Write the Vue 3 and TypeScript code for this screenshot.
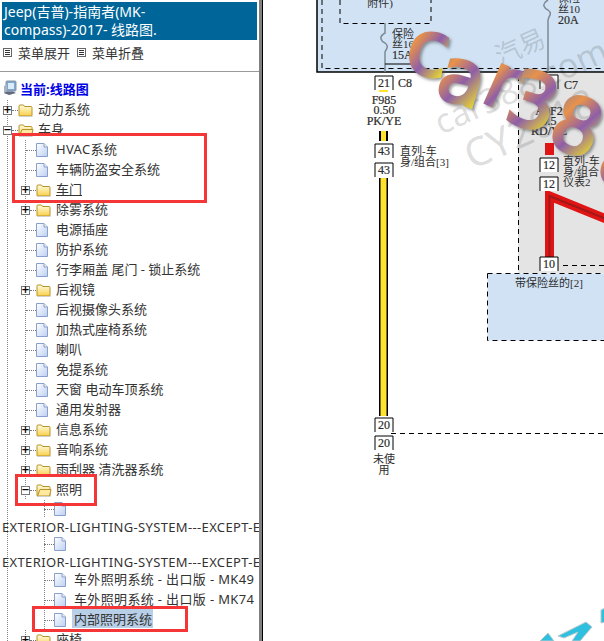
<template>
  <div class="page">
    <aside class="side">
      <div class="title">Jeep(吉普)-指南者(MK-<br />compass)-2017- 线路图.</div>
      <div class="menu">
        <span class="menu-item"><i class="menu-ico"></i>菜单展开</span>
        <span class="menu-item"><i class="menu-ico"></i>菜单折叠</span>
      </div>
      <div class="current">
        <svg class="pc" width="14" height="16" viewBox="0 0 14 16">
          <rect x="3" y="1" width="10" height="10" rx="1" fill="#7fa6cf" stroke="#8a93a5" />
          <rect x="5" y="3" width="6" height="6" fill="#d9ecfb" />
          <path d="M1 6l3-2v10l-3-1z" fill="#aab3c2" />
          <path d="M1 13l5 2 7-2-3-1.500H4z" fill="#5d6a80" />
        </svg>
        <span>当前:线路图</span>
      </div>
      <svg class="defs" width="0" height="0">
        <linearGradient id="folderFill" x1="0" y1="0" x2="0" y2="1">
          <stop offset="0" stop-color="#fffde0" />
          <stop offset="1" stop-color="#f9cf4a" />
        </linearGradient>
        <linearGradient id="fileFill" x1="0" y1="0" x2="1" y2="1">
          <stop offset="0" stop-color="#ffffff" />
          <stop offset="1" stop-color="#bcd0f2" />
        </linearGradient>
      </svg>
      <div class="tree">
        <div
          v-for="(n, i) in rows"
          :key="i"
          class="row"
          :class="[`d${n.depth}`, { long: n.long }]"
        >
          <div class="line">
            <span v-if="n.toggle" class="toggle">{{ n.toggle === 'open' ? '−' : '+' }}</span>
            <span class="stub" :class="{ free: !n.toggle }"></span>
            <span class="ico">
              <svg v-if="n.folder" width="16" height="14" viewBox="0 0 16 14">
                <path
                  d="M1 12.500V3q0-1 1-1h3.500l1 1.500H13q1 0 1 1v8q0 .5-.5.5H1.500q-.5 0-.5-.5z"
                  fill="url(#folderFill)"
                  stroke="#b8912a"
                />
                <path v-if="n.toggle === 'open'" d="M1.500 13l2.500-6.500h11L13.500 13z" fill="#fde9a0" stroke="#b8912a" />
                <path d="M2 13.500h12.500" stroke="#cfcfcf" />
              </svg>
              <svg v-else width="12" height="14" viewBox="0 0 12 14">
                <path d="M.5.500h7.500l3.500 3.500v9.500h-11z" fill="url(#fileFill)" stroke="#8aa0cc" />
                <path d="M8 .5v3.500h3.500" fill="#e6eefb" stroke="#8aa0cc" />
              </svg>
            </span>
            <span
              v-if="!n.long"
              class="label"
              :class="{ under: n.under, sel: n.sel, wide: n.wide }"
            >{{ n.text }}</span>
          </div>
          <div v-if="n.long" class="long-text">{{ n.text }}</div>
        </div>
      </div>
      <div class="mark m1"></div>
      <div class="mark m2"></div>
      <div class="mark m3"></div>
    </aside>

    <main class="canvas">
      <svg width="342" height="641" viewBox="262 0 342 641">
        <defs>
          <linearGradient id="tube" x1="0" y1="0" x2="1" y2="1">
            <stop offset="0" stop-color="#7d7fa8" />
            <stop offset=".3" stop-color="#e8924a" />
            <stop offset=".55" stop-color="#8e5fa8" />
            <stop offset=".85" stop-color="#e8d730" />
            <stop offset="1" stop-color="#d4c21e" />
          </linearGradient>
          <filter id="shade" x="-20%" y="-20%" width="150%" height="150%">
            <feDropShadow dx="2" dy="2" stdDeviation="1.500" flood-color="#555" flood-opacity=".6" />
          </filter>
        </defs>

        <!-- blue and grey areas -->
        <rect x="317" y="-2" width="290" height="74" fill="#d0e2f3" stroke="#000" stroke-width="1.500" />
        <rect x="518" y="73" width="90" height="200" fill="#e4e4e4" />
        <path d="M322 0v68.500H604" class="dash" />
        <path d="M340 0v23.500h91V0" class="dash" />
        <path d="M518.500 76V272" class="dash" />
        <rect x="487.500" y="273.500" width="120" height="67" fill="#d0e2f3" class="dash" />
        <path d="M563 265.500H604" class="dash" />
        <path d="M391 433.500H604" class="dash" />

        <!-- fuses -->
        <path d="M385 23v10q-5 3-4 6t4 4q4 3 1 7l-1 2v20" class="wire" />
        <path d="M548 0q-5 3-4 6t4 4q4 3 1 7l-1 3v52" class="wire" />
        <path d="M385 64h28" stroke="#000" fill="none" />

        <!-- wires -->
        <rect x="379" y="88" width="9" height="4" fill="#ffe22e" />
        <rect x="379" y="131" width="9" height="10" fill="#000" />
        <rect x="381" y="131" width="5" height="10" fill="#ffe22e" />
        <rect x="379" y="178" width="9" height="238" fill="#000" />
        <rect x="380.500" y="178" width="6" height="238" fill="#ffe22e" />
        <rect x="545" y="143" width="9" height="12" fill="#e01414" />
        <path d="M549.500 257V196L606 219" fill="none" stroke="#e01414" stroke-width="9" />
        <path d="M549.500 257V196L606 219" fill="none" stroke="#a01818" stroke-width="2" />

        <!-- connectors -->
        <g v-for="b in boxes" :key="b.y + b.t + b.x">
          <path
            :d="`M${b.x} ${b.y + 14}V${b.y}H${b.x + 18}V${b.y + 14}`"
            fill="#fff"
            stroke="#000"
          />
          <text :x="b.x + 9" :y="b.y + 11" text-anchor="middle" class="t num">{{ b.t }}</text>
        </g>

        <text
          v-for="l in labels"
          :key="l.t + l.x + l.y"
          :x="l.x"
          :y="l.y"
          :text-anchor="l.mid ? 'middle' : 'start'"
          class="t"
          :class="{ num: isLatin(l.t) }"
        >{{ l.t }}</text>

        <!-- grey watermark -->
        <g class="ghost">
          <text transform="translate(441 135) rotate(-24)" font-size="34">car388.com</text>
          <text transform="translate(472 170) rotate(-24)" font-size="40">CY2018</text>
          <text transform="translate(500 66) rotate(-24)" font-size="26">汽易</text>
        </g>

        <!-- logo -->
        <g class="logo" filter="url(#shade)">
          <text transform="translate(403 70) rotate(12)">c</text>
          <text transform="translate(433 96) rotate(16)">a</text>
          <text transform="translate(479 100) rotate(24)">r</text>
          <text transform="translate(502 119) rotate(18)">3</text>
          <text transform="translate(545 143) rotate(20)">8</text>
          <text transform="translate(593 178) rotate(20)">8</text>
        </g>
        <g fill="#2fc0e0" stroke="#b9c9cc" stroke-width="1">
          <path d="M540 641l8-8 6 8zM558 636l28-14 6 5-12 14h-8l6-9-14 6z" />
          <path d="M601 610l4-2v14l-4 1z" />
        </g>
      </svg>
    </main>
  </div>
</template>

<script setup lang="ts">
interface Row {
  text: string
  depth: number
  folder?: boolean
  toggle?: 'open' | 'closed'
  long?: boolean
  under?: boolean
  sel?: boolean
  wide?: boolean
}

const file = (text: string, depth = 1): Row => ({ text, depth })
const dir = (text: string, depth = 1, toggle: 'open' | 'closed' = 'closed'): Row => ({
  text,
  depth,
  folder: true,
  toggle
})

const rows: Row[] = [
  dir('动力系统', 0),
  dir('车身', 0, 'open'),
  { ...file('HVAC系统'), wide: true },
  file('车辆防盗安全系统'),
  { ...dir('车门'), under: true },
  dir('除雾系统'),
  file('电源插座'),
  file('防护系统'),
  file('行李厢盖 尾门 - 锁止系统'),
  dir('后视镜'),
  file('后视摄像头系统'),
  file('加热式座椅系统'),
  file('喇叭'),
  file('免提系统'),
  file('天窗 电动车顶系统'),
  file('通用发射器'),
  dir('信息系统'),
  dir('音响系统'),
  dir('雨刮器 清洗器系统'),
  dir('照明', 1, 'open'),
  { ...file('EXTERIOR-LIGHTING-SYSTEM---EXCEPT-EXPORT', 2), long: true },
  { ...file('EXTERIOR-LIGHTING-SYSTEM---EXCEPT-EXPORT', 2), long: true },
  { ...file('车外照明系统 - 出口版 - MK49', 2), wide: true },
  { ...file('车外照明系统 - 出口版 - MK74', 2), wide: true },
  { ...file('内部照明系统', 2), sel: true },
  dir('座椅')
]

const boxes = [
  { x: 375, y: 76, t: '21' },
  { x: 375, y: 144, t: '43' },
  { x: 375, y: 163, t: '43' },
  { x: 375, y: 418, t: '20' },
  { x: 375, y: 436, t: '20' },
  { x: 540, y: 75, t: '8' },
  { x: 540, y: 158, t: '12' },
  { x: 540, y: 177, t: '12' },
  { x: 540, y: 257, t: '10' }
]

const labels = [
  { x: 380, y: 7, t: '附件)', mid: true },
  { x: 392, y: 38, t: '保险' },
  { x: 392, y: 48, t: '丝16' },
  { x: 392, y: 59, t: '15A' },
  { x: 558, y: 2, t: '保险' },
  { x: 558, y: 13, t: '丝10' },
  { x: 558, y: 24, t: '20A' },
  { x: 398, y: 87, t: 'C8' },
  { x: 564, y: 89, t: 'C7' },
  { x: 384, y: 104, t: 'F985', mid: true },
  { x: 384, y: 114, t: '0.50', mid: true },
  { x: 384, y: 125, t: 'PK/YE', mid: true },
  { x: 400, y: 155, t: '直列-车' },
  { x: 400, y: 166, t: '身/组合[3]' },
  { x: 549, y: 115, t: 'A9F2', mid: true },
  { x: 549, y: 125, t: '0.5', mid: true },
  { x: 549, y: 135, t: 'RD/YE', mid: true },
  { x: 563, y: 165, t: '直列-车' },
  { x: 563, y: 176, t: '身/组合' },
  { x: 563, y: 186, t: '仪表2' },
  { x: 549, y: 287, t: '带保险丝的[2]', mid: true },
  { x: 384, y: 463, t: '未使', mid: true },
  { x: 384, y: 474, t: '用', mid: true }
]

const isLatin = (s: string) => /^[\x20-\x7e]+$/.test(s)
</script>

<style>
html,
body {
  margin: 0;
  background: #fff;
  overflow: hidden;
}
</style>

<style scoped>
.page {
  display: flex;
  width: 604px;
  height: 641px;
  overflow: hidden;
  background: #fff;
  font-family: "Noto Sans", "Noto Sans CJK SC", sans-serif;
  font-size: 13px;
  color: #333;
}

.side {
  position: relative;
  flex: 0 0 259px;
  width: 259px;
  overflow: hidden;
  padding-top: 2px;
  box-sizing: border-box;
}

.title {
  margin-left: 2px;
  width: 255px;
  height: 38px;
  box-sizing: border-box;
  padding: 1px 2px;
  background: #006699;
  color: #fff;
  font-size: 14px;
  line-height: 18px;
}

.menu {
  display: flex;
  align-items: center;
  gap: 7px;
  height: 24px;
  padding: 0 0 7px 3px;
  border-bottom: 1px solid #999;
}

.menu-item {
  display: flex;
  align-items: center;
  gap: 6px;
}

.menu-ico {
  display: block;
  width: 5px;
  height: 5px;
  padding: 1px;
  border: 1px solid #666;
  background: repeating-linear-gradient(#333 0 1px, #fff 1px 2px) content-box;
}

.current {
  display: flex;
  align-items: center;
  gap: 3px;
  height: 24px;
  padding: 4px 0 0 3px;
  color: #0000e6;
  font-weight: 700;
}

.defs {
  position: absolute;
}

.tree {
  background: repeating-linear-gradient(#888 0 1px, transparent 1px 2px) 7px 0 / 1px 100% no-repeat;
}

.row {
  min-height: 20px;
}

.row.long {
  height: 35px;
}

.line {
  display: flex;
  align-items: center;
  height: 20px;
  white-space: nowrap;
}

.long .line {
  height: 18px;
}

.d0 .line {
  padding-left: 3px;
}

.d1 .line {
  padding-left: 21px;
  background: repeating-linear-gradient(#888 0 1px, transparent 1px 2px) 25px 0 / 1px 100% no-repeat;
}

.d2 .line {
  padding-left: 39px;
  background: repeating-linear-gradient(#888 0 1px, transparent 1px 2px) 44px 0 / 1px 100% no-repeat;
}

.toggle {
  display: flex;
  align-items: center;
  justify-content: center;
  width: 9px;
  height: 9px;
  border: 1px solid #777;
  box-sizing: border-box;
  background: #fff;
  color: #000;
  font: 700 10px/1 "DejaVu Sans", sans-serif;
}

.stub {
  width: 6px;
  border-top: 1px dotted #777;
}

.stub.free {
  width: 10px;
  margin-left: 5px;
}

.ico {
  display: flex;
  width: 20px;
  flex: none;
}

.label {
  padding: 0 1px;
  margin: 0 0 3px -1px;
}

.wide {
  letter-spacing: 0.35px;
}

.under {
  text-decoration: underline;
}

.sel {
  background: #b8cfe8;
  margin-left: -2px;
  padding: 0 1px 0 2px;
}

.long-text {
  height: 17px;
  line-height: 19px;
  padding-left: 2px;
  white-space: nowrap;
  letter-spacing: 0.35px;
}

.mark {
  position: absolute;
  border: 3px solid #f53636;
  box-sizing: border-box;
}

.m1 {
  left: 12px;
  top: 133px;
  width: 195px;
  height: 70px;
}

.m2 {
  left: 15px;
  top: 474px;
  width: 82px;
  height: 32px;
}

.m3 {
  left: 32px;
  top: 606px;
  width: 156px;
  height: 26px;
}

.canvas {
  flex: 1;
  border-left: 3px solid #808080;
  position: relative;
}

.canvas::before {
  content: "";
  display: block;
  position: absolute;
  left: 0;
  top: 0;
  bottom: 0;
  width: 1px;
  background: #000;
}

.canvas svg {
  display: block;
}

.dash {
  fill: none;
  stroke: #000;
  stroke-dasharray: 5 4;
}

rect.dash {
  fill: #d0e2f3;
}

.wire {
  fill: none;
  stroke: #7c8a96;
  stroke-width: 1.500;
}

.t {
  font-family: "Liberation Serif", "Noto Sans CJK SC", serif;
  font-size: 11px;
  fill: #2c2c2c;
}

.num {
  font-size: 12px;
  stroke: #2c2c2c;
  stroke-width: 0.2;
}

.ghost text {
  font-family: "Noto Sans", "Noto Sans CJK SC", sans-serif;
  fill: #000;
  fill-opacity: 0.14;
}

.logo text {
  font-family: "DejaVu Sans", sans-serif;
  font-size: 76px;
  font-weight: 400;
  fill: url(#tube);
  stroke: url(#tube);
  stroke-width: 3px;
}
</style>
